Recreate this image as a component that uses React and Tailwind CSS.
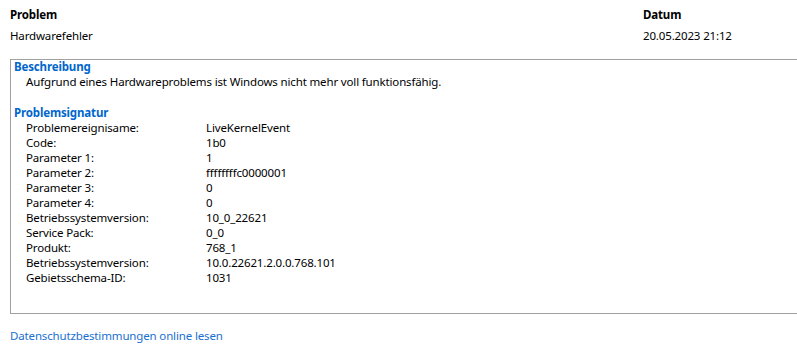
export default function App() {
  const rows = [
    ["Problemereignisame:", "LiveKernelEvent"],
    ["Code:", "1b0"],
    ["Parameter 1:", "1"],
    ["Parameter 2:", "ffffffffc0000001"],
    ["Parameter 3:", "0"],
    ["Parameter 4:", "0"],
    ["Betriebssystemversion:", "10_0_22621"],
    ["Service Pack:", "0_0"],
    ["Produkt:", "768_1"],
    ["Betriebssystemversion:", "10.0.22621.2.0.0.768.101"],
    ["Gebietsschema-ID:", "1031"],
  ];
  return (
    <div
      className="w-[797px] h-[356px] bg-white text-black text-[11.5px] leading-[15px] tracking-[-0.15px] overflow-hidden"
      style={{ fontFamily: '"Segoe UI", "Noto Sans", sans-serif' }}
    >
      <div className="flex pt-[7px]">
        <div className="pl-[10px] w-[643px] shrink-0 font-bold">Problem</div>
        <div className="font-bold">Datum</div>
      </div>
      <div className="flex mt-[6px]">
        <div className="pl-[10px] w-[643px] shrink-0">Hardwarefehler</div>
        <div>20.05.2023 21:12</div>
      </div>
      <div className="ml-[10px] mt-[16px] h-[255px] border border-[#a0a0a0] border-r-0">
        <div className="pl-[3px] font-bold text-[#0066cc] leading-[14px]">Beschreibung</div>
        <div className="pl-[15px]">Aufgrund eines Hardwareproblems ist Windows nicht mehr voll funktionsfähig.</div>
        <div className="pl-[3px] mt-[16px] font-bold text-[#0066cc]">Problemsignatur</div>
        <div className="pl-[15px]">
          {rows.map(([k, v], i) => (
            <div key={i} className="flex">
              <div className="w-[180px] shrink-0">{k}</div>
              <div>{v}</div>
            </div>
          ))}
        </div>
      </div>
      <div className="pl-[10px] mt-[14px] text-[#1a6fd0]">Datenschutzbestimmungen online lesen</div>
    </div>
  );
}
